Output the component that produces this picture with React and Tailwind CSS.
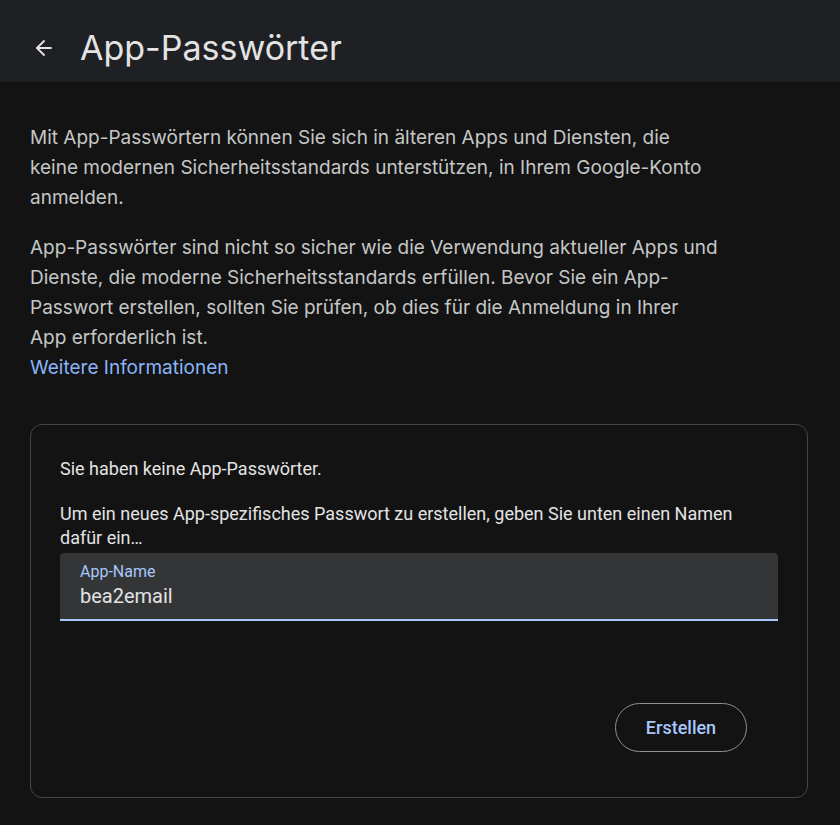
import { ArrowLeft } from 'lucide-react';

const App = () => {
  return (
    <div className="min-h-[825px] w-[840px] bg-[#131314] font-['Roboto',sans-serif]">
      <header className="flex h-[82px] items-center bg-[#1f2023] pl-[32px] pt-[13px]">
        <button className="flex h-6 w-6 items-center justify-center text-[#e3e3e3]">
          <ArrowLeft size={24} strokeWidth={1.8} />
        </button>
        <h1 className="ml-[24px] font-['Inter',sans-serif] text-[34px] leading-[40px] text-[#e3e3e3]">
          App-Passwörter
        </h1>
      </header>

      <main className="pl-[30px] pr-[32px] pt-[41px] font-['Inter',sans-serif]">
        <p className="text-[19px] leading-[30px] text-[#c4c7c5]">
          Mit App-Passwörtern können Sie sich in älteren Apps und Diensten, die
          <br />
          keine modernen Sicherheitsstandards unterstützen, in Ihrem Google-Konto
          <br />
          anmelden.
        </p>
        <p className="mt-[20px] text-[19px] leading-[30px] text-[#c4c7c5]">
          App-Passwörter sind nicht so sicher wie die Verwendung aktueller Apps und
          <br />
          Dienste, die moderne Sicherheitsstandards erfüllen. Bevor Sie ein App-
          <br />
          Passwort erstellen, sollten Sie prüfen, ob dies für die Anmeldung in Ihrer
          <br />
          App erforderlich ist.
        </p>
        <a className="block text-[19px] leading-[30px] text-[#8ab4f8]">Weitere Informationen</a>

        <section className="mt-[41px] rounded-[12px] border border-[#444746] px-[29px] pb-[45px] pt-[32px] font-['Roboto',sans-serif]">
          <p className="text-[18px] leading-[24px] text-[#e3e3e3]">Sie haben keine App-Passwörter.</p>
          <p className="mt-[21px] text-[18px] leading-[24px] text-[#e3e3e3]">
            Um ein neues App-spezifisches Passwort zu erstellen, geben Sie unten einen Namen
            <br />
            dafür ein…
          </p>
          <div className="mt-[3px] flex h-[68px] flex-col rounded-t-[4px] border-b-2 border-[#a8c7fa] bg-[#333537] px-[20px] pt-[9px]">
            <span className="text-[16px] leading-[20px] text-[#a8c7fa]">App-Name</span>
            <span className="text-[20px] leading-[28px] text-[#e3e3e3]">bea2email</span>
          </div>
          <div className="mt-[82px] flex justify-end pr-[31px]">
            <button className="h-[49px] w-[132px] rounded-full border border-[#8e918f] text-[18px] font-medium text-[#a8c7fa]">
              Erstellen
            </button>
          </div>
        </section>
      </main>
    </div>
  );
};

export default App;
